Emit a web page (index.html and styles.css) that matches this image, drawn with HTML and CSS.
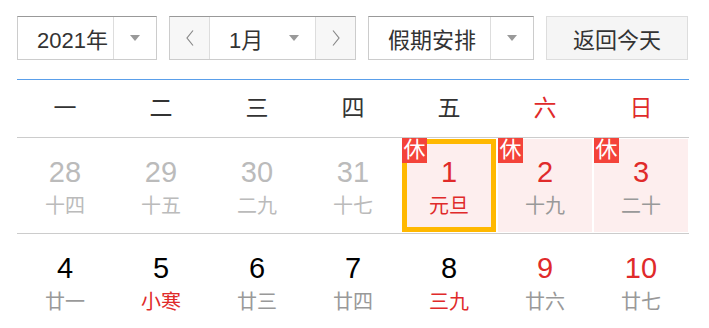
FILE: index.html
```html
<!DOCTYPE html>
<html lang="zh-CN">

<head>
    <meta charset="UTF-8">
    <meta name="viewport" content="width=device-width, initial-scale=1.0">
    <title>万年历</title>
    <link rel="stylesheet" href="styles.css">
</head>

<body>
    <div class="calendar">
        <div class="toolbar">
            <div class="select year">
                <span class="label">2021年</span>
                <span class="arrow"><i class="caret"></i></span>
            </div>
            <div class="select month">
                <span class="step">
                    <svg width="8" height="16" viewBox="0 0 8 16"><polyline points="7,0.5 1,8 7,15.5" /></svg>
                </span>
                <span class="label">1月<i class="caret"></i></span>
                <span class="step">
                    <svg width="8" height="16" viewBox="0 0 8 16"><polyline points="1,0.5 7,8 1,15.5" /></svg>
                </span>
            </div>
            <div class="select holiday">
                <span class="label">假期安排</span>
                <span class="arrow"><i class="caret"></i></span>
            </div>
            <button class="today">返回今天</button>
        </div>

        <div class="table">
            <div class="weekdays">
                <span>一</span>
                <span>二</span>
                <span>三</span>
                <span>四</span>
                <span>五</span>
                <span class="weekend">六</span>
                <span class="weekend">日</span>
            </div>
            <div class="week">
                <div class="day other"><b>28</b><small>十四</small></div>
                <div class="day other"><b>29</b><small>十五</small></div>
                <div class="day other"><b>30</b><small>二九</small></div>
                <div class="day other"><b>31</b><small>十七</small></div>
                <div class="day rest selected"><em class="badge">休</em><b>1</b><small class="festival">元旦</small></div>
                <div class="day rest"><em class="badge">休</em><b>2</b><small>十九</small></div>
                <div class="day rest"><em class="badge">休</em><b>3</b><small>二十</small></div>
            </div>
            <div class="week">
                <div class="day"><b>4</b><small>廿一</small></div>
                <div class="day"><b>5</b><small class="festival">小寒</small></div>
                <div class="day"><b>6</b><small>廿三</small></div>
                <div class="day"><b>7</b><small>廿四</small></div>
                <div class="day"><b>8</b><small class="festival">三九</small></div>
                <div class="day weekend"><b>9</b><small>廿六</small></div>
                <div class="day weekend"><b>10</b><small>廿七</small></div>
            </div>
        </div>
    </div>
</body>

</html>
```

FILE: styles.css
```css
* {
    margin: 0;
    padding: 0;
    box-sizing: border-box;
    font-family: 'Liberation Sans', 'Noto Sans CJK SC', sans-serif;
}

html,
body {
    background-color: #fff;
}

.calendar {
    padding: 16px 0 0 17px;
    width: 706px;
}

.toolbar {
    display: flex;
    gap: 12px;
    height: 44px;
}

.select {
    display: flex;
    height: 44px;
    border: 1px solid #ccc;
    border-top-color: #999;
    background-color: #fff;
    color: #333;
    font-size: 22px;
}

.select .label {
    flex: 1;
    display: flex;
    align-items: center;
    padding-left: 19px;
}

.select .arrow {
    width: 43px;
    display: flex;
    align-items: center;
    justify-content: center;
    border-left: 1px solid #ddd;
}

.caret {
    display: block;
    width: 0;
    height: 0;
    border-left: 5px solid transparent;
    border-right: 5px solid transparent;
    border-top: 6px solid #999;
}

.year {
    width: 140px;
}

.month {
    width: 187px;
}

.month .label {
    justify-content: space-between;
    padding-right: 16px;
}

.month .step {
    width: 40px;
    display: flex;
    align-items: center;
    justify-content: center;
    background-color: #f7f7f7;
}

.month .step:first-child {
    border-right: 1px solid #ddd;
}

.month .step:last-child {
    border-left: 1px solid #ddd;
}

.step svg polyline {
    fill: none;
    stroke: #888;
    stroke-width: 1.2;
}

.holiday {
    width: 166px;
}

.today {
    width: 142px;
    height: 44px;
    border: 1px solid #ddd;
    background-color: #f5f5f5;
    color: #333;
    font-size: 22px;
    cursor: pointer;
}

.table {
    width: 672px;
    margin-top: 19px;
    border-top: 1px solid #5a9fea;
}

.weekdays {
    display: grid;
    grid-template-columns: repeat(7, 96px);
    height: 58px;
    border-bottom: 1px solid #ccc;
    font-size: 23px;
    line-height: 57px;
    text-align: center;
    color: #333;
}

.weekdays .weekend {
    color: #e02a2a;
}

.week {
    display: grid;
    grid-template-columns: repeat(7, 96px);
    height: 96px;
    border-bottom: 1px solid #ccc;
}

.day {
    position: relative;
    margin: 1px;
    display: flex;
    flex-direction: column;
    align-items: center;
    padding-top: 16px;
}

.day b {
    font-weight: normal;
    font-size: 29px;
    line-height: 34px;
    color: #000;
}

.day small {
    margin-top: 5px;
    font-size: 20px;
    line-height: 24px;
    color: #999;
}

.day.other b,
.day.other small {
    color: #bbb;
}

.day.weekend b,
.day.rest b,
.day .festival {
    color: #e02a2a;
}

.day.rest {
    background-color: #fdeeee;
}

.day.selected {
    box-shadow: inset 0 0 0 5px #ffb800;
}

.badge {
    position: absolute;
    left: 0;
    top: -1px;
    width: 25px;
    height: 25px;
    background-color: #f4433a;
    color: #fff;
    font-style: normal;
    font-size: 22px;
    line-height: 24px;
    text-align: center;
}
```
